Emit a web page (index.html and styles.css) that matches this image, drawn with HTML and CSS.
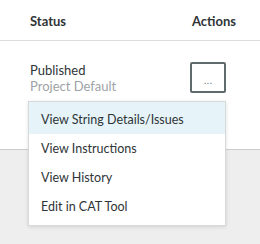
FILE: index.html
```html
<!DOCTYPE html>
<html lang="en">
<head>
    <meta charset="UTF-8">
    <title>Strings</title>
    <link rel="stylesheet" href="styles.css">
</head>
<body>
    <div class="table">
        <div class="table-head">
            <div class="col-status">Status</div>
            <div class="col-actions">Actions</div>
        </div>
        <div class="table-row">
            <div class="col-status">
                <div class="status-main">Published</div>
                <div class="status-sub">Project Default</div>
            </div>
            <div class="col-actions">
                <button class="btn-more">...</button>
                <ul class="menu">
                    <li class="menu-item active">View String Details/Issues</li>
                    <li class="menu-item">View Instructions</li>
                    <li class="menu-item">View History</li>
                    <li class="menu-item">Edit in CAT Tool</li>
                </ul>
            </div>
        </div>
    </div>
    <div class="page-rest"></div>
</body>
</html>
```

FILE: styles.css
```css
html, body {
    height: 100%;
}
body {
    margin: 0;
    display: flex;
    flex-direction: column;
    background-color: #eeeeee;
    font-family: Lato, "Liberation Sans", sans-serif;
    font-size: 13px;
    color: #2f3437;
}
.table {
    background: white;
}
.page-rest {
    flex: 1;
}
.table-head {
    display: flex;
    justify-content: space-between;
    height: 41px;
    padding: 2px 24px 0 30px;
    box-sizing: border-box;
    align-items: center;
    font-weight: bold;
    border-bottom: 1px solid #dcdcdc;
}
.table-row {
    display: flex;
    justify-content: space-between;
    height: 109px;
    padding: 21px 34px 0 30px;
    box-sizing: border-box;
    border-bottom: 1px solid #cccccc;
}
.status-main {
    line-height: 16px;
}
.status-sub {
    line-height: 16px;
    color: #9ea3a6;
}
.col-actions {
    position: relative;
}
.btn-more {
    width: 36px;
    height: 31px;
    border: 2px solid #5f6b6d;
    border-radius: 2px;
    background: white;
    color: #5f6b6d;
    font-size: 10px;
    padding: 5px 0 0;
}
.menu {
    position: absolute;
    z-index: 10;
    top: 39px;
    right: 0;
    width: 198px;
    margin: 0;
    padding: 0 0 4px;
    list-style: none;
    background: white;
    border: 1px solid #d6dadb;
    box-shadow: 0 1px 4px rgba(0,0,0,0.12);
    box-sizing: border-box;
    font-size: 12.5px;
}
.menu-item {
    height: 29px;
    line-height: 29px;
    padding: 0 12px;
}
.menu-item:first-child {
    height: 32px;
    padding-top: 3px;
    box-sizing: border-box;
}
.menu-item.active {
    background-color: #e6f4f9;
}
```
